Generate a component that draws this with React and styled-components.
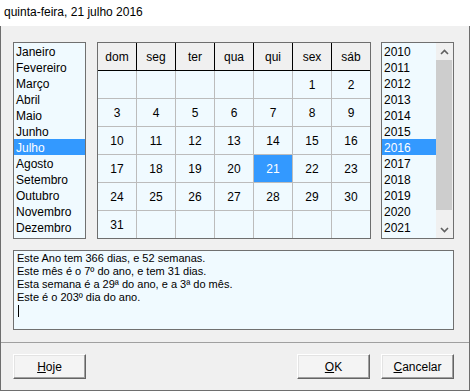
import React from 'react';
import styled, { createGlobalStyle } from 'styled-components';

const GlobalStyle = createGlobalStyle`
    html, body {
        margin: 0;
        padding: 0;
        background: #ffffff;
    }
    body {
        font-family: 'Liberation Sans', Arial, sans-serif;
        font-size: 12px;
        color: #000000;
    }
`;

const months = ['Janeiro', 'Fevereiro', 'Março', 'Abril', 'Maio', 'Junho', 'Julho',
    'Agosto', 'Setembro', 'Outubro', 'Novembro', 'Dezembro'];
const years = [2010, 2011, 2012, 2013, 2014, 2015, 2016, 2017, 2018, 2019, 2020, 2021];
const weekDays = ['dom', 'seg', 'ter', 'qua', 'qui', 'sex', 'sáb'];
const memoLines = [
    'Este Ano tem 366 dias, e 52 semanas.',
    'Este mês é o 7º do ano, e tem 31 dias.',
    'Esta semana é a 29ª do ano, e a 3ª do mês.',
    'Este é o 203º dia do ano.'
];

const Window = styled.div`
    width: 470px;
    height: 391px;
    display: flex;
    flex-direction: column;
    box-sizing: border-box;
`;

const TitleBar = styled.div`
    height: 26px;
    flex: none;
    background: #ffffff;
    padding-left: 4px;
    line-height: 24px;
    font-size: 12px;
`;

const Body = styled.div`
    flex: 1;
    display: flex;
    flex-direction: column;
    background: #f0f0f0;
    border: 1px solid #6e6e6e;
    border-top: none;
`;

const Main = styled.div`
    padding: 16px 15px 0 12px;
    display: flex;
    flex-direction: column;
    gap: 11px;
`;

const TopRow = styled.div`
    display: flex;
    height: 197px;
`;

const ListBox = styled.div`
    width: 73px;
    box-sizing: border-box;
    border: 1px solid #707070;
    background: #f0faff;
    display: flex;
    margin-right: ${(p) => p.gap || 0}px;
`;

const ListItems = styled.div`
    flex: 1;
    display: flex;
    flex-direction: column;
    overflow: hidden;
`;

const ListItem = styled.div`
    height: 16px;
    flex: none;
    box-sizing: border-box;
    padding: 2px 0 0 2px;
    line-height: 14px;
    white-space: nowrap;
    background: ${(p) => (p.selected ? '#3399ff' : 'transparent')};
    color: ${(p) => (p.selected ? '#ffffff' : '#000000')};
`;

const ScrollBar = styled.div`
    width: 17px;
    flex: none;
    background: #f0f0f0;
    display: flex;
    flex-direction: column;
`;

const ScrollArrow = styled.div`
    height: 17px;
    flex: none;
    display: flex;
    align-items: center;
    justify-content: center;
`;

const ScrollThumb = styled.div`
    height: 150px;
    margin-right: 1px;
    background: #cdcdcd;
`;

const ScrollTrack = styled.div`
    flex: 1;
`;

const Calendar = styled.div`
    width: 274px;
    box-sizing: border-box;
    border: 1px solid #6e6e6e;
    background: #f0faff;
    display: grid;
    grid-template-columns: repeat(6, 39px) 38px;
    grid-template-rows: 28px repeat(5, 28px) 27px;
    margin-right: 10px;
`;

const Cell = styled.div`
    box-sizing: border-box;
    display: flex;
    align-items: center;
    justify-content: center;
    border-right: ${(p) => (p.lastCol ? 'none' : `1px solid ${p.header ? '#000000' : '#bcbcbc'}`)};
    border-bottom: ${(p) => (p.lastRow ? 'none' : `1px solid ${p.header ? '#000000' : '#bcbcbc'}`)};
    background: ${(p) => (p.selected ? '#3399ff' : p.header ? '#f0f0f0' : 'transparent')};
    color: ${(p) => (p.selected ? '#ffffff' : '#000000')};
    font-size: 12px;
`;

const Memo = styled.div`
    height: 80px;
    box-sizing: border-box;
    border: 1px solid #707070;
    background: #f0faff;
    padding: 1px 3px;
    line-height: 13px;
    font-size: 11px;
`;

const Caret = styled.div`
    width: 1px;
    height: 12px;
    margin: 1px 0 0 1px;
    background: #000000;
`;

const Separator = styled.div`
    height: 1px;
    margin-top: 12px;
    background: #a0a0a0;
`;

const Footer = styled.div`
    display: flex;
    padding: 11px 15px 0 12px;
    gap: 11px;
`;

const Spacer = styled.div`
    flex: 1;
`;

const Button = styled.div`
    width: 73px;
    height: 25px;
    box-sizing: border-box;
    border: 1px solid;
    border-color: #ffffff #646464 #646464 #ffffff;
    box-shadow: inset -1px -1px 0 #a0a0a0, inset 1px 1px 0 #e3e3e3;
    background: #f4f4f4;
    display: flex;
    align-items: center;
    justify-content: center;
    font-size: 12px;
`;

const Key = styled.span`
    text-decoration: underline;
`;

const Chevron = ({ down }) => (
    <svg width='9' height='6' viewBox='0 0 9 6'>
        <polyline
            points={down ? '1,1 4.5,4.5 8,1' : '1,5 4.5,1.5 8,5'}
            fill='none'
            stroke='#606060'
            strokeWidth='1.6'
        />
    </svg>
);

function buildDays() {
    const cells = [];
    for (let i = 0; i < 5; i++) cells.push(null);
    for (let d = 1; d <= 31; d++) cells.push(d);
    while (cells.length < 42) cells.push(null);
    return cells;
}

export default function App() {
    const days = buildDays();
    return (
        <>
            <GlobalStyle />
            <Window>
                <TitleBar>quinta-feira, 21 julho 2016</TitleBar>
                <Body>
                    <Main>
                        <TopRow>
                            <ListBox gap={11}>
                                <ListItems>
                                    {months.map((m) => (
                                        <ListItem key={m} selected={m === 'Julho'}>{m}</ListItem>
                                    ))}
                                </ListItems>
                            </ListBox>
                            <Calendar>
                                {weekDays.map((w, i) => (
                                    <Cell key={w} header lastCol={i === 6}>{w}</Cell>
                                ))}
                                {days.map((d, i) => (
                                    <Cell
                                        key={i}
                                        lastCol={i % 7 === 6}
                                        lastRow={i >= 35}
                                        selected={d === 21}
                                    >
                                        {d || ''}
                                    </Cell>
                                ))}
                            </Calendar>
                            <ListBox>
                                <ListItems>
                                    {years.map((y) => (
                                        <ListItem key={y} selected={y === 2016}>{y}</ListItem>
                                    ))}
                                </ListItems>
                                <ScrollBar>
                                    <ScrollArrow><Chevron /></ScrollArrow>
                                    <ScrollThumb />
                                    <ScrollTrack />
                                    <ScrollArrow><Chevron down /></ScrollArrow>
                                </ScrollBar>
                            </ListBox>
                        </TopRow>
                        <Memo>
                            {memoLines.map((line) => (
                                <div key={line}>{line}</div>
                            ))}
                            <Caret />
                        </Memo>
                    </Main>
                    <Separator />
                    <Footer>
                        <Button><span><Key>H</Key>oje</span></Button>
                        <Spacer />
                        <Button><span><Key>O</Key>K</span></Button>
                        <Button><span><Key>C</Key>ancelar</span></Button>
                    </Footer>
                </Body>
            </Window>
        </>
    );
}
